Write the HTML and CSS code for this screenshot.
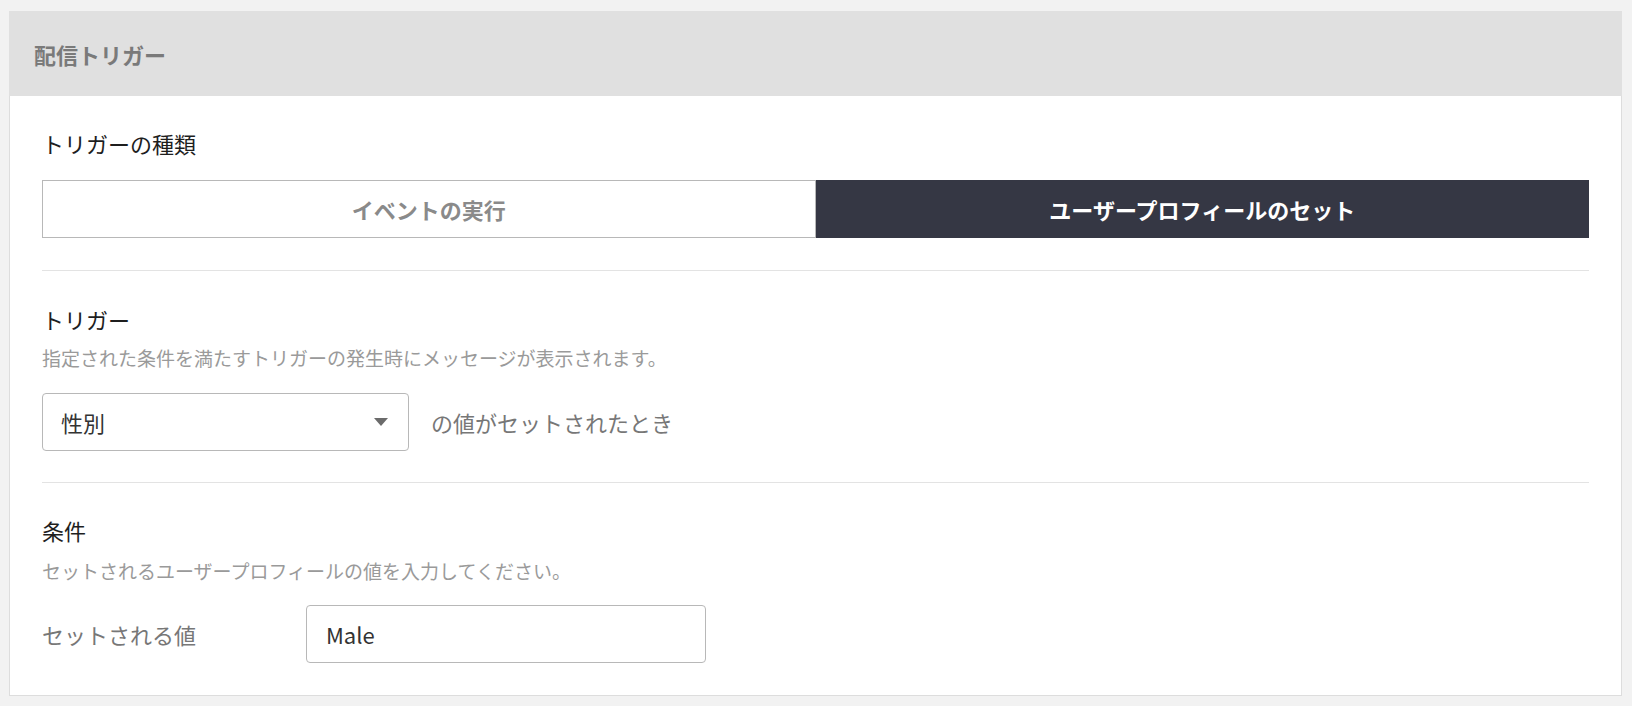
FILE: index.html
```html
<!DOCTYPE html>
<html lang="ja">
<head>
<meta charset="utf-8">
<title>配信トリガー</title>
<link rel="stylesheet" href="styles.css">
</head>
<body>
<div class="page">
  <section class="panel">
    <header class="panel-header">配信トリガー</header>
    <div class="panel-body">
      <div class="section section-type">
        <h3 class="section-title">トリガーの種類</h3>
        <div class="toggle">
          <button class="toggle-btn">イベントの実行</button>
          <button class="toggle-btn is-active">ユーザープロフィールのセット</button>
        </div>
      </div>
      <div class="section section-trigger">
        <h3 class="section-title">トリガー</h3>
        <p class="section-desc">指定された条件を満たすトリガーの発生時にメッセージが表示されます。</p>
        <div class="trigger-row">
          <div class="select">
            <span class="select-value">性別</span>
            <svg class="select-caret" width="14" height="8" viewBox="0 0 14 8"><polygon points="0,0 14,0 7,8" fill="#6b6b6b"/></svg>
          </div>
          <span class="trigger-suffix">の値がセットされたとき</span>
        </div>
      </div>
      <div class="section section-condition">
        <h3 class="section-title">条件</h3>
        <p class="section-desc">セットされるユーザープロフィールの値を入力してください。</p>
        <div class="field-row">
          <span class="field-label">セットされる値</span>
          <div class="text-input">Male</div>
        </div>
      </div>
    </div>
  </section>
</div>
</body>
</html>
```

FILE: styles.css
```css
* { box-sizing: border-box; }
html, body { margin: 0; padding: 0; }
body {
  background: #f2f2f2;
  font-family: "Noto Sans CJK JP", "Noto Sans", sans-serif;
  color: #222;
}
.page {
  padding: 11px 10px 12px 9px;
}
.panel {
  background: #fff;
  border: 1px solid #dddddd;
}
.panel-header {
  height: 85px;
  background: #e0e0e0;
  display: flex;
  align-items: center;
  padding-left: 25px;
  font-size: 22px;
  font-weight: 700;
  color: #7a7a7a;
  margin: -1px -1px 0 -1px;
}
.panel-body {
  padding: 0 32px;
}
.section {
  border-bottom: 1px solid #e3e3e3;
}
.section-type {
  padding: 31px 0 32px;
}
.section-trigger {
  padding: 32px 0 31px;
}
.section-condition {
  padding: 31px 0 32px;
  border-bottom: none;
}
.section-title {
  margin: 0;
  font-size: 22px;
  line-height: 32px;
  font-weight: 400;
  color: #1e1e1e;
}
.section-desc {
  font-size: 19px;
  line-height: 28px;
  color: #9a9a9a;
}
.section-trigger .section-desc { margin: 9px 0 0; }
.section-condition .section-desc { margin: 11px 0 0; }
.toggle {
  margin-top: 21px;
  display: flex;
  height: 58px;
}
.toggle-btn {
  flex: 1;
  font-family: inherit;
  font-size: 22px;
  font-weight: 700;
  color: #8a8a8a;
  background: #fff;
  border: 1px solid #b8b8b8;
  margin: 0;
  padding: 0;
}
.toggle-btn.is-active {
  background: #353744;
  border-color: #353744;
  color: #fff;
}
.trigger-row {
  margin-top: 21px;
  display: flex;
  align-items: center;
  gap: 22px;
}
.select {
  width: 367px;
  height: 58px;
  border: 1px solid #b8b8b8;
  border-radius: 4px;
  display: flex;
  align-items: center;
  justify-content: space-between;
  padding: 0 20px 0 18px;
}
.select-value {
  font-size: 22px;
  color: #333;
}
.trigger-suffix {
  font-size: 22px;
  color: #777;
}
.field-row {
  margin-top: 20px;
  display: flex;
  align-items: center;
}
.field-label {
  width: 264px;
  font-size: 22px;
  color: #777;
}
.text-input {
  width: 400px;
  height: 58px;
  border: 1px solid #b8b8b8;
  border-radius: 4px;
  display: flex;
  align-items: center;
  padding: 0 19px;
  font-size: 22px;
  color: #333;
}
```
